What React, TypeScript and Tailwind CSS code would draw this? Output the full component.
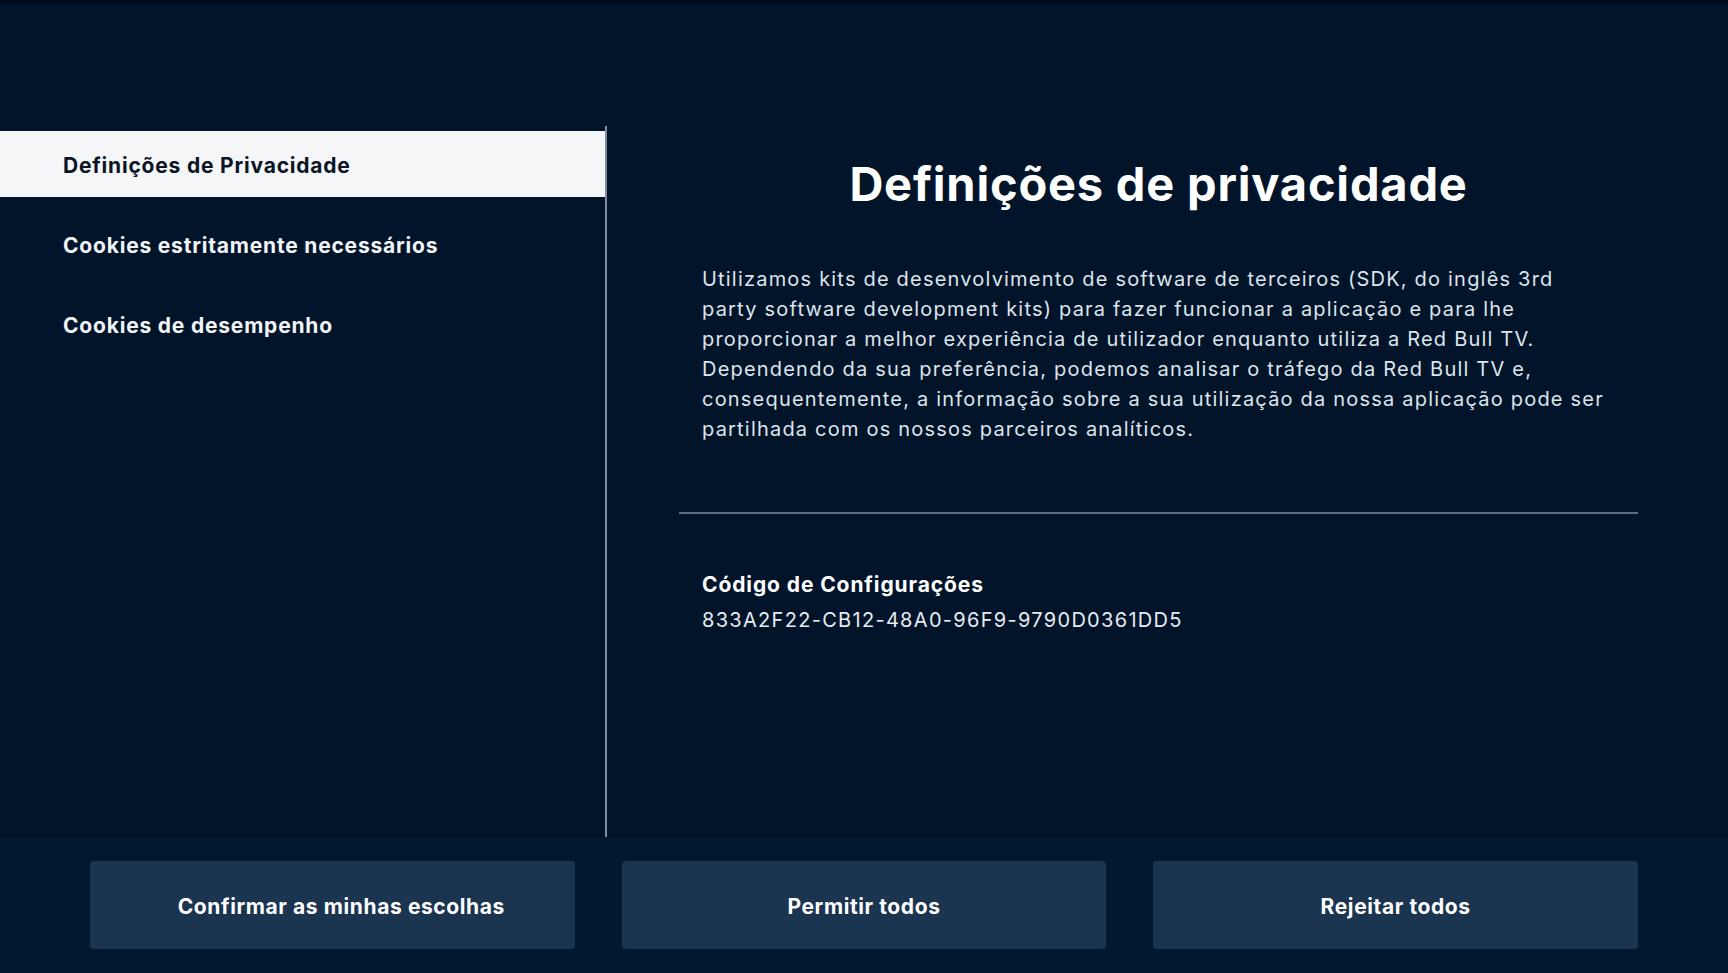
import React from "react";

export default function App() {
  const items = [
    "Definições de Privacidade",
    "Cookies estritamente necessários",
    "Cookies de desempenho",
  ];
  const buttons = ["Confirmar as minhas escolhas", "Permitir todos", "Rejeitar todos"];
  return (
    <div
      className="w-[1728px] h-[973px] bg-[#011429] flex flex-col overflow-hidden"
      style={{ fontFamily: "Inter, 'Noto Sans', sans-serif" }}
    >
      <div className="h-[3px] bg-[#000c1a]" />
      <div className="flex flex-1 min-h-0">
        <div className="w-[607px] flex flex-col pt-[123px]">
          <div className="flex-1 border-r-2 border-[#7f8c9d] pt-[5px] flex flex-col gap-[14px]">
            {items.map((t, i) => (
              <div
                key={t}
                className={
                  "h-[66px] flex items-center pl-[63px] pt-[4px] text-[21px] font-bold tracking-[0.8px] " +
                  (i === 0 ? "bg-[#f5f6f8] text-[#0b1424]" : "text-[#f2f4f7]")
                }
              >
                {t}
              </div>
            ))}
          </div>
        </div>
        <div className="flex-1 pl-[72px] pr-[90px] pt-[153px]">
          <h1 className="text-center text-[47px] leading-[56px] font-bold text-white tracking-[0.8px]">
            Definições de privacidade
          </h1>
          <p className="mt-[52px] px-[23px] text-[20px] leading-[30px] text-[#dde4ec] font-normal tracking-[1.2px]">
            Utilizamos kits de desenvolvimento de software de terceiros (SDK, do inglês 3rd party
            software development kits) para fazer funcionar a aplicação e para lhe proporcionar a
            melhor experiência de utilizador enquanto utiliza a Red Bull TV. Dependendo da sua
            preferência, podemos analisar o tráfego da Red Bull TV e, consequentemente, a
            informação sobre a sua utilização da nossa aplicação pode ser partilhada com os nossos
            parceiros analíticos.
          </p>
          <div className="mt-[68px] h-[2px] bg-[#5d6d82]" />
          <div className="px-[23px] mt-[56px]">
            <div className="text-[21px] leading-[30px] font-bold text-white tracking-[0.9px]">
              Código de Configurações
            </div>
            <div className="mt-[5px] text-[20px] leading-[30px] text-[#e6ebf1] tracking-[1.3px]">
              833A2F22-CB12-48A0-96F9-9790D0361DD5
            </div>
          </div>
        </div>
      </div>
      <div className="h-[136px] bg-[#011830] grid grid-cols-3 gap-[47px] px-[90px] pt-[24px]">
        {buttons.map((t, i) => (
          <button
            key={t}
            className="h-[88px] rounded-[4px] bg-[#1b3450] text-white text-[21px] font-bold tracking-[0.6px] pt-[4px] flex items-center justify-center"
          >
            <span className={i === 0 ? "pl-[18px]" : ""}>{t}</span>
          </button>
        ))}
      </div>
    </div>
  );
}
